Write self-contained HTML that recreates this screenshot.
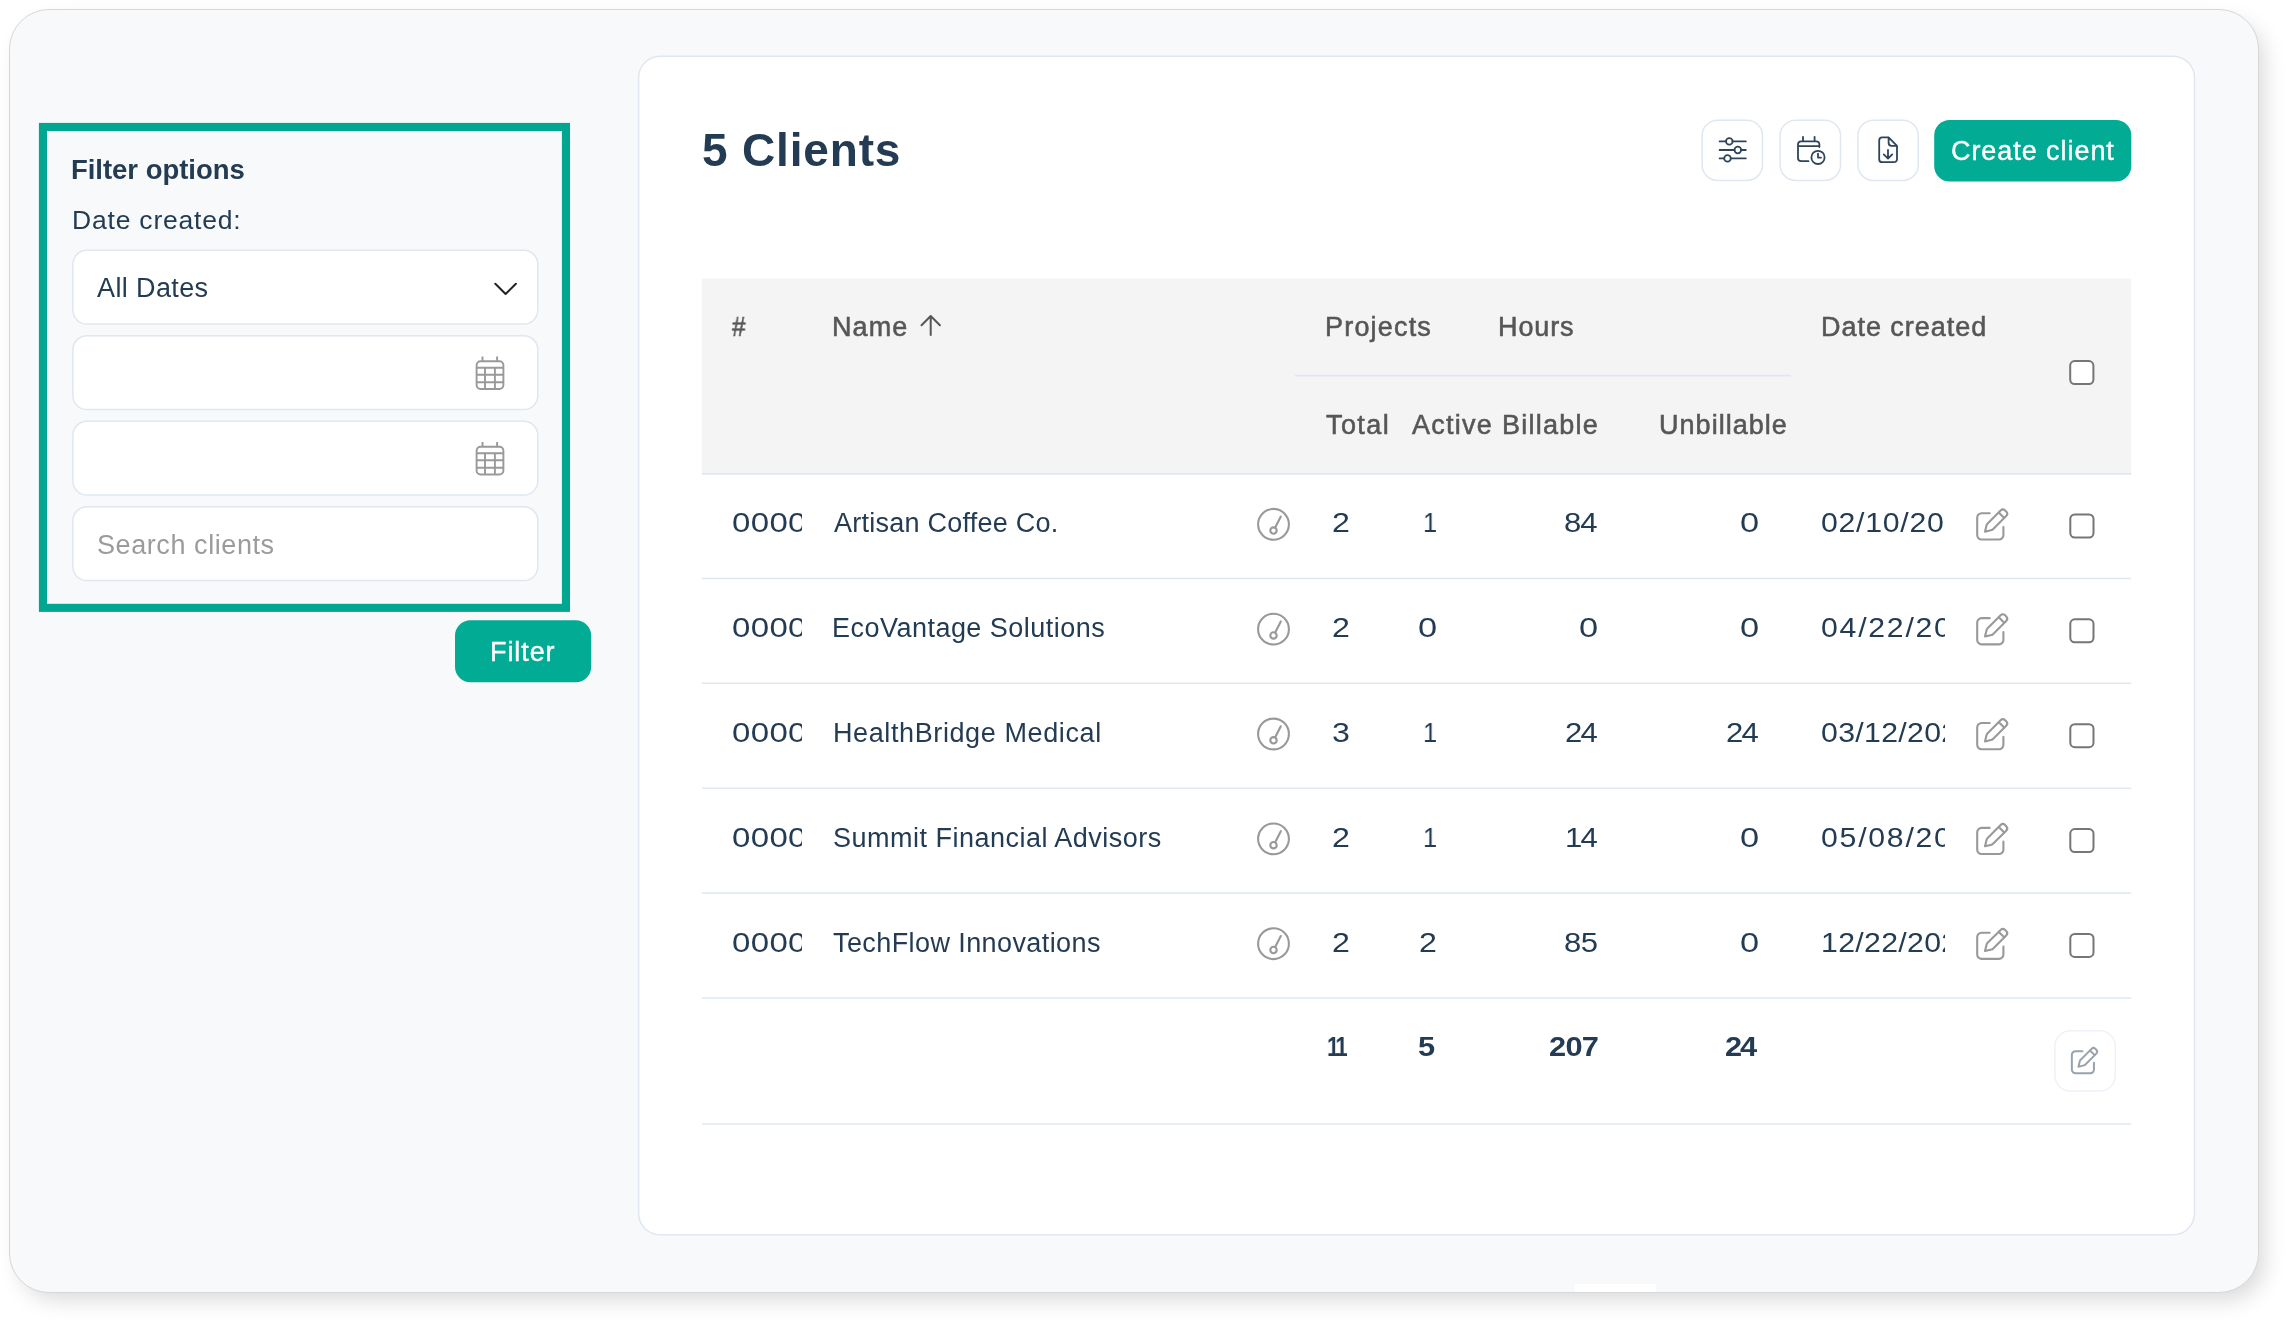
<!DOCTYPE html><html lang="en"><head><meta charset="utf-8"><title>Clients</title><style>
html,body{margin:0;padding:0;background:#fff}
body{width:2286px;height:1320px;position:relative;overflow:hidden;font-family:'Liberation Sans',sans-serif}
.a{position:absolute;box-sizing:border-box}
.t{position:absolute;white-space:pre;margin:0;will-change:transform}
.frame{left:9px;top:9px;width:2250px;height:1284px;border:1px solid #d6d7d9;border-radius:40px;background:#f8f9fb;box-shadow:8px 10px 22px -3px rgba(0,0,0,.15)}
svg{position:absolute;left:0;top:0;overflow:visible}

</style></head><body>
<div class="a frame"></div>
<div class="a" style="left:1575px;top:1284px;width:81px;height:8px;background:#fff"></div>
<svg width="2286" height="1320" fill="none" stroke-linecap="round" stroke-linejoin="round">
<rect x="42.95" y="126.95" width="523" height="480.9" stroke="#00a68f" stroke-width="8.1" stroke-linejoin="miter"/>
<rect x="72.9" y="250.3" width="464.9" height="73.75" rx="14" fill="#fff" stroke="#e0e7f1" stroke-width="1.5"/>
<rect x="72.9" y="335.8" width="464.9" height="73.75" rx="14" fill="#fff" stroke="#e0e7f1" stroke-width="1.5"/>
<rect x="72.9" y="421.3" width="464.9" height="73.75" rx="14" fill="#fff" stroke="#e0e7f1" stroke-width="1.5"/>
<rect x="72.9" y="506.8" width="464.9" height="73.75" rx="14" fill="#fff" stroke="#e0e7f1" stroke-width="1.5"/>
<rect x="455" y="620.2" width="136.2" height="62.1" rx="15.5" fill="#02ab94"/>
<polyline points="495.3,283.8 505.6,294 515.9,283.8" stroke="#222" stroke-width="2"/>
<g transform="translate(0,0)" stroke="#999" stroke-width="1.9" stroke-linecap="butt">
<rect x="476.6" y="361.2" width="26.8" height="27.8" rx="4"/>
<path d="M482.5 356.6V361M497.1 356.6V361M476.6 367.7H503.4M476.6 374.7H503.4M476.6 382.2H503.4M485 367.7V389M494.9 367.7V389"/>
</g>
<g transform="translate(0,85.5)" stroke="#999" stroke-width="1.9" stroke-linecap="butt">
<rect x="476.6" y="361.2" width="26.8" height="27.8" rx="4"/>
<path d="M482.5 356.6V361M497.1 356.6V361M476.6 367.7H503.4M476.6 374.7H503.4M476.6 382.2H503.4M485 367.7V389M494.9 367.7V389"/>
</g>
<rect x="638.6" y="56.2" width="1555.9" height="1178.6" rx="21.5" fill="#fff" stroke="#e0e7f1" stroke-width="1.5"/>
<rect x="1702.1" y="120.2" width="60.4" height="60.2" rx="15.5" fill="#fff" stroke="#e0e7f1" stroke-width="1.5"/>
<rect x="1780.1" y="120.2" width="60.4" height="60.2" rx="15.5" fill="#fff" stroke="#e0e7f1" stroke-width="1.5"/>
<rect x="1857.9" y="120.2" width="60.4" height="60.2" rx="15.5" fill="#fff" stroke="#e0e7f1" stroke-width="1.5"/>
<rect x="1934.2" y="119.9" width="197.1" height="61.7" rx="15.5" fill="#02ab94"/>
<rect x="701.8" y="278.7" width="1429.4" height="195" fill="#f4f4f4"/>
<path d="M701.8 473.9H2131.2M1295 375.6H1790.8" stroke="#e0e7f1" stroke-width="1.6" stroke-linecap="butt"/>
<path d="M701.8 578.50H2131.2M701.8 683.35H2131.2M701.8 788.20H2131.2M701.8 893.05H2131.2M701.8 997.90H2131.2M701.8 1123.90H2131.2" stroke="#e0e7f1" stroke-width="1.5" stroke-linecap="butt"/>
<g stroke="#767676" stroke-width="2" fill="#fff">
<rect x="2070.2" y="361.1" width="23.2" height="23" rx="4.5"/>
<rect x="2070.3" y="514.50" width="23.2" height="23" rx="4.5"/>
<rect x="2070.3" y="619.35" width="23.2" height="23" rx="4.5"/>
<rect x="2070.3" y="724.20" width="23.2" height="23" rx="4.5"/>
<rect x="2070.3" y="829.05" width="23.2" height="23" rx="4.5"/>
<rect x="2070.3" y="933.90" width="23.2" height="23" rx="4.5"/>
</g>
<rect x="2054.9" y="1030.8" width="60.4" height="60.2" rx="15.5" fill="#fff" stroke="#eef1f7" stroke-width="1.5"/>
<path d="M930.7 335V316M921.5 325.2L930.7 316L939.9 325.2" stroke="#565656" stroke-width="2"/>
<g stroke="#2d4459" stroke-width="1.8"><path d="M1719.6 141.4H1726M1732.6 141.4H1745.8M1719.6 150H1734.4M1741.2 150H1745.8M1719.6 158.4H1724.2M1730.8 158.4H1745.8"/><circle cx="1729.3" cy="141.4" r="3.3"/><circle cx="1737.8" cy="150" r="3.3"/><circle cx="1727.5" cy="158.4" r="3.3"/></g>
<g stroke="#2d4459" stroke-width="1.8"><path d="M1808.5 161.2H1801.2a3.2 3.2 0 0 1 -3.2 -3.2V144.5a3.2 3.2 0 0 1 3.2 -3.2H1816.2a3.2 3.2 0 0 1 3.2 3.2V147M1798 146.2H1819.4M1803 136.8V141.3M1814.6 136.8V141.3"/><circle cx="1818" cy="157.4" r="6.6" fill="#fff"/><path d="M1818 153.6V157.6H1821"/></g>
<g stroke="#2d4459" stroke-width="1.8"><path d="M1888.6 137.4H1882.2a3 3 0 0 0 -3 3V159.2a3 3 0 0 0 3 3H1894a3 3 0 0 0 3 -3V145.8L1888.6 137.4V142.8a3 3 0 0 0 3 3H1897"/><path d="M1888 150V158.4M1883.8 154.4L1888 158.6L1892.2 154.4"/></g>
<g stroke="#999" stroke-width="2.1"><circle cx="1273.5" cy="524.30" r="15.4"/><circle cx="1273.5" cy="530.60" r="3.2"/><path d="M1275.2 527.60L1280.8 516.60"/></g>
<g transform="translate(1976.2,508.3) scale(1.0)" stroke="#999" stroke-width="2.10"><path d="M13.5 5H5.4A4.4 4.4 0 0 0 1 9.4V26.8A4.4 4.4 0 0 0 5.4 31.2H22.8A4.4 4.4 0 0 0 27.2 26.8V18.8"/><path d="M8.8 23.4L10.4 16.8Q10.6 16 11.2 15.4L24.4 2.2A3.2 3.2 0 0 1 28.9 2.2L30 3.3A3.2 3.2 0 0 1 30 7.8L16.8 21Q16.2 21.6 15.4 21.8Z"/><path d="M22.6 4.2L28 9.6"/></g>
<g stroke="#999" stroke-width="2.1"><circle cx="1273.5" cy="629.15" r="15.4"/><circle cx="1273.5" cy="635.45" r="3.2"/><path d="M1275.2 632.45L1280.8 621.45"/></g>
<g transform="translate(1976.2,613.15) scale(1.0)" stroke="#999" stroke-width="2.10"><path d="M13.5 5H5.4A4.4 4.4 0 0 0 1 9.4V26.8A4.4 4.4 0 0 0 5.4 31.2H22.8A4.4 4.4 0 0 0 27.2 26.8V18.8"/><path d="M8.8 23.4L10.4 16.8Q10.6 16 11.2 15.4L24.4 2.2A3.2 3.2 0 0 1 28.9 2.2L30 3.3A3.2 3.2 0 0 1 30 7.8L16.8 21Q16.2 21.6 15.4 21.8Z"/><path d="M22.6 4.2L28 9.6"/></g>
<g stroke="#999" stroke-width="2.1"><circle cx="1273.5" cy="734.00" r="15.4"/><circle cx="1273.5" cy="740.30" r="3.2"/><path d="M1275.2 737.30L1280.8 726.30"/></g>
<g transform="translate(1976.2,718.0) scale(1.0)" stroke="#999" stroke-width="2.10"><path d="M13.5 5H5.4A4.4 4.4 0 0 0 1 9.4V26.8A4.4 4.4 0 0 0 5.4 31.2H22.8A4.4 4.4 0 0 0 27.2 26.8V18.8"/><path d="M8.8 23.4L10.4 16.8Q10.6 16 11.2 15.4L24.4 2.2A3.2 3.2 0 0 1 28.9 2.2L30 3.3A3.2 3.2 0 0 1 30 7.8L16.8 21Q16.2 21.6 15.4 21.8Z"/><path d="M22.6 4.2L28 9.6"/></g>
<g stroke="#999" stroke-width="2.1"><circle cx="1273.5" cy="838.85" r="15.4"/><circle cx="1273.5" cy="845.15" r="3.2"/><path d="M1275.2 842.15L1280.8 831.15"/></g>
<g transform="translate(1976.2,822.85) scale(1.0)" stroke="#999" stroke-width="2.10"><path d="M13.5 5H5.4A4.4 4.4 0 0 0 1 9.4V26.8A4.4 4.4 0 0 0 5.4 31.2H22.8A4.4 4.4 0 0 0 27.2 26.8V18.8"/><path d="M8.8 23.4L10.4 16.8Q10.6 16 11.2 15.4L24.4 2.2A3.2 3.2 0 0 1 28.9 2.2L30 3.3A3.2 3.2 0 0 1 30 7.8L16.8 21Q16.2 21.6 15.4 21.8Z"/><path d="M22.6 4.2L28 9.6"/></g>
<g stroke="#999" stroke-width="2.1"><circle cx="1273.5" cy="943.70" r="15.4"/><circle cx="1273.5" cy="950.00" r="3.2"/><path d="M1275.2 947.00L1280.8 936.00"/></g>
<g transform="translate(1976.2,927.7) scale(1.0)" stroke="#999" stroke-width="2.10"><path d="M13.5 5H5.4A4.4 4.4 0 0 0 1 9.4V26.8A4.4 4.4 0 0 0 5.4 31.2H22.8A4.4 4.4 0 0 0 27.2 26.8V18.8"/><path d="M8.8 23.4L10.4 16.8Q10.6 16 11.2 15.4L24.4 2.2A3.2 3.2 0 0 1 28.9 2.2L30 3.3A3.2 3.2 0 0 1 30 7.8L16.8 21Q16.2 21.6 15.4 21.8Z"/><path d="M22.6 4.2L28 9.6"/></g>
<g transform="translate(2071,1047) scale(0.84375)" stroke="#98a3ae" stroke-width="2.37"><path d="M13.5 5H5.4A4.4 4.4 0 0 0 1 9.4V26.8A4.4 4.4 0 0 0 5.4 31.2H22.8A4.4 4.4 0 0 0 27.2 26.8V18.8"/><path d="M8.8 23.4L10.4 16.8Q10.6 16 11.2 15.4L24.4 2.2A3.2 3.2 0 0 1 28.9 2.2L30 3.3A3.2 3.2 0 0 1 30 7.8L16.8 21Q16.2 21.6 15.4 21.8Z"/><path d="M22.6 4.2L28 9.6"/></g>
</svg>
<span class="t" style="left:71.46px;top:155.6px;font:700 27.5px/27.5px 'Liberation Sans', sans-serif;letter-spacing:-0.032px;color:#233c53">Filter options</span>
<span class="t" style="left:72.21px;top:206.8px;font:400 26.5px/26.5px 'Liberation Sans', sans-serif;letter-spacing:0.802px;color:#233c53">Date created:</span>
<span class="t" style="left:97.43px;top:275.0px;font:400 27px/27px 'Liberation Sans', sans-serif;letter-spacing:0.385px;color:#233c53">All Dates</span>
<span class="t" style="left:96.71px;top:531.6px;font:400 27px/27px 'Liberation Sans', sans-serif;letter-spacing:0.578px;color:#9b9b9b">Search clients</span>
<span class="t" style="left:489.69px;top:638.9px;font:400 27px/27px 'Liberation Sans', sans-serif;letter-spacing:0.912px;color:#fff;-webkit-text-stroke:0.4px #fff">Filter</span>
<span class="t" style="left:701.85px;top:126.5px;font:700 46px/46px 'Liberation Sans', sans-serif;letter-spacing:0.832px;color:#233c53">5 Clients</span>
<span class="t" style="left:1950.94px;top:138.1px;font:400 27px/27px 'Liberation Sans', sans-serif;letter-spacing:0.94px;color:#fff;-webkit-text-stroke:0.4px #fff">Create client</span>
<span class="t" style="left:732.13px;top:313.7px;font:400 27px/27px 'Liberation Sans', sans-serif;letter-spacing:0px;color:#565656;transform:scaleX(0.9);transform-origin:0 0;-webkit-text-stroke:0.55px #565656">#</span>
<span class="t" style="left:832.31px;top:313.7px;font:400 27px/27px 'Liberation Sans', sans-serif;letter-spacing:1.118px;color:#565656;-webkit-text-stroke:0.55px #565656">Name</span>
<span class="t" style="left:1324.91px;top:313.9px;font:400 27px/27px 'Liberation Sans', sans-serif;letter-spacing:1.191px;color:#565656;-webkit-text-stroke:0.55px #565656">Projects</span>
<span class="t" style="left:1497.51px;top:313.9px;font:400 27px/27px 'Liberation Sans', sans-serif;letter-spacing:0.884px;color:#565656;-webkit-text-stroke:0.55px #565656">Hours</span>
<span class="t" style="left:1821.01px;top:313.7px;font:400 27px/27px 'Liberation Sans', sans-serif;letter-spacing:0.963px;color:#565656;-webkit-text-stroke:0.55px #565656">Date created</span>
<span class="t" style="left:1325.73px;top:411.9px;font:400 27px/27px 'Liberation Sans', sans-serif;letter-spacing:1.429px;color:#565656;-webkit-text-stroke:0.55px #565656">Total</span>
<span class="t" style="left:1412.40px;top:411.9px;font:400 27px/27px 'Liberation Sans', sans-serif;letter-spacing:1.263px;color:#565656;-webkit-text-stroke:0.55px #565656">Active</span>
<span class="t" style="left:1502.41px;top:411.9px;font:400 27px/27px 'Liberation Sans', sans-serif;letter-spacing:1.25px;color:#565656;-webkit-text-stroke:0.55px #565656">Billable</span>
<span class="t" style="left:1659.20px;top:411.9px;font:400 27px/27px 'Liberation Sans', sans-serif;letter-spacing:1.035px;color:#565656;-webkit-text-stroke:0.55px #565656">Unbillable</span>
<div class="a" style="left:725px;top:503.1px;width:77.0px;height:39.5px;overflow:hidden"><span class="t" style="left:6.85px;top:6px;font:400 27.5px/27.5px 'Liberation Sans', sans-serif;letter-spacing:0.29px;color:#233c53;transform:scaleX(1.2);transform-origin:0 0">00001</span></div>
<span class="t" style="left:833.63px;top:510.1px;font:400 27px/27px 'Liberation Sans', sans-serif;letter-spacing:0.238px;color:#233c53">Artisan Coffee Co.</span>
<span class="t" style="left:1332.04px;top:509.1px;font:400 27.5px/27.5px 'Liberation Sans', sans-serif;letter-spacing:0px;color:#233c53;transform:scaleX(1.17);transform-origin:0 0">2</span>
<span class="t" style="left:1422.62px;top:509.1px;font:400 27.5px/27.5px 'Liberation Sans', sans-serif;letter-spacing:0px;color:#233c53;transform:scaleX(0.92);transform-origin:0 0">1</span>
<span class="t" style="left:1564.19px;top:509.1px;font:400 27.5px/27.5px 'Liberation Sans', sans-serif;letter-spacing:-0.963px;color:#233c53;transform:scaleX(1.13);transform-origin:0 0">84</span>
<span class="t" style="left:1740.29px;top:509.1px;font:400 27.5px/27.5px 'Liberation Sans', sans-serif;letter-spacing:0px;color:#233c53;transform:scaleX(1.25);transform-origin:0 0">0</span>
<div class="a" style="left:1815px;top:503.1px;width:129.7px;height:39.5px;overflow:hidden"><span class="t" style="left:6.27px;top:6px;font:400 27.5px/27.5px 'Liberation Sans', sans-serif;letter-spacing:0.656px;color:#233c53;transform:scaleX(1.1);transform-origin:0 0">02/10/2025</span></div>
<div class="a" style="left:725px;top:608.0px;width:77.0px;height:39.5px;overflow:hidden"><span class="t" style="left:6.85px;top:6px;font:400 27.5px/27.5px 'Liberation Sans', sans-serif;letter-spacing:0.29px;color:#233c53;transform:scaleX(1.2);transform-origin:0 0">00001</span></div>
<span class="t" style="left:831.86px;top:615.0px;font:400 27px/27px 'Liberation Sans', sans-serif;letter-spacing:0.475px;color:#233c53">EcoVantage Solutions</span>
<span class="t" style="left:1332.04px;top:614.0px;font:400 27.5px/27.5px 'Liberation Sans', sans-serif;letter-spacing:0px;color:#233c53;transform:scaleX(1.17);transform-origin:0 0">2</span>
<span class="t" style="left:1417.79px;top:614.0px;font:400 27.5px/27.5px 'Liberation Sans', sans-serif;letter-spacing:0px;color:#233c53;transform:scaleX(1.25);transform-origin:0 0">0</span>
<span class="t" style="left:1578.99px;top:614.0px;font:400 27.5px/27.5px 'Liberation Sans', sans-serif;letter-spacing:0px;color:#233c53;transform:scaleX(1.25);transform-origin:0 0">0</span>
<span class="t" style="left:1740.29px;top:614.0px;font:400 27.5px/27.5px 'Liberation Sans', sans-serif;letter-spacing:0px;color:#233c53;transform:scaleX(1.25);transform-origin:0 0">0</span>
<div class="a" style="left:1815px;top:608.0px;width:129.7px;height:39.5px;overflow:hidden"><span class="t" style="left:6.27px;top:6px;font:400 27.5px/27.5px 'Liberation Sans', sans-serif;letter-spacing:1.583px;color:#233c53;transform:scaleX(1.1);transform-origin:0 0">04/22/2025</span></div>
<div class="a" style="left:725px;top:712.8px;width:77.0px;height:39.5px;overflow:hidden"><span class="t" style="left:6.85px;top:6px;font:400 27.5px/27.5px 'Liberation Sans', sans-serif;letter-spacing:0.29px;color:#233c53;transform:scaleX(1.2);transform-origin:0 0">00001</span></div>
<span class="t" style="left:832.56px;top:719.8px;font:400 27px/27px 'Liberation Sans', sans-serif;letter-spacing:0.606px;color:#233c53">HealthBridge Medical</span>
<span class="t" style="left:1331.90px;top:718.8px;font:400 27.5px/27.5px 'Liberation Sans', sans-serif;letter-spacing:0px;color:#233c53;transform:scaleX(1.17);transform-origin:0 0">3</span>
<span class="t" style="left:1422.62px;top:718.8px;font:400 27.5px/27.5px 'Liberation Sans', sans-serif;letter-spacing:0px;color:#233c53;transform:scaleX(0.92);transform-origin:0 0">1</span>
<span class="t" style="left:1564.82px;top:718.8px;font:400 27.5px/27.5px 'Liberation Sans', sans-serif;letter-spacing:-1.525px;color:#233c53;transform:scaleX(1.13);transform-origin:0 0">24</span>
<span class="t" style="left:1726.12px;top:718.8px;font:400 27.5px/27.5px 'Liberation Sans', sans-serif;letter-spacing:-1.525px;color:#233c53;transform:scaleX(1.13);transform-origin:0 0">24</span>
<div class="a" style="left:1815px;top:712.8px;width:129.7px;height:39.5px;overflow:hidden"><span class="t" style="left:6.27px;top:6px;font:400 27.5px/27.5px 'Liberation Sans', sans-serif;letter-spacing:0.292px;color:#233c53;transform:scaleX(1.1);transform-origin:0 0">03/12/2025</span></div>
<div class="a" style="left:725px;top:817.6px;width:77.0px;height:39.5px;overflow:hidden"><span class="t" style="left:6.85px;top:6px;font:400 27.5px/27.5px 'Liberation Sans', sans-serif;letter-spacing:0.29px;color:#233c53;transform:scaleX(1.2);transform-origin:0 0">00001</span></div>
<span class="t" style="left:832.61px;top:824.6px;font:400 27px/27px 'Liberation Sans', sans-serif;letter-spacing:0.488px;color:#233c53">Summit Financial Advisors</span>
<span class="t" style="left:1332.04px;top:823.6px;font:400 27.5px/27.5px 'Liberation Sans', sans-serif;letter-spacing:0px;color:#233c53;transform:scaleX(1.17);transform-origin:0 0">2</span>
<span class="t" style="left:1422.62px;top:823.6px;font:400 27.5px/27.5px 'Liberation Sans', sans-serif;letter-spacing:0px;color:#233c53;transform:scaleX(0.92);transform-origin:0 0">1</span>
<span class="t" style="left:1564.82px;top:823.6px;font:400 27.5px/27.5px 'Liberation Sans', sans-serif;letter-spacing:-1.525px;color:#233c53;transform:scaleX(1.13);transform-origin:0 0">14</span>
<span class="t" style="left:1740.29px;top:823.6px;font:400 27.5px/27.5px 'Liberation Sans', sans-serif;letter-spacing:0px;color:#233c53;transform:scaleX(1.25);transform-origin:0 0">0</span>
<div class="a" style="left:1815px;top:817.6px;width:129.7px;height:39.5px;overflow:hidden"><span class="t" style="left:6.27px;top:6px;font:400 27.5px/27.5px 'Liberation Sans', sans-serif;letter-spacing:1.583px;color:#233c53;transform:scaleX(1.1);transform-origin:0 0">05/08/2025</span></div>
<div class="a" style="left:725px;top:922.5px;width:77.0px;height:39.5px;overflow:hidden"><span class="t" style="left:6.85px;top:6px;font:400 27.5px/27.5px 'Liberation Sans', sans-serif;letter-spacing:0.29px;color:#233c53;transform:scaleX(1.2);transform-origin:0 0">00001</span></div>
<span class="t" style="left:832.98px;top:929.5px;font:400 27px/27px 'Liberation Sans', sans-serif;letter-spacing:0.41px;color:#233c53">TechFlow Innovations</span>
<span class="t" style="left:1332.04px;top:928.5px;font:400 27.5px/27.5px 'Liberation Sans', sans-serif;letter-spacing:0px;color:#233c53;transform:scaleX(1.17);transform-origin:0 0">2</span>
<span class="t" style="left:1419.24px;top:928.5px;font:400 27.5px/27.5px 'Liberation Sans', sans-serif;letter-spacing:0px;color:#233c53;transform:scaleX(1.17);transform-origin:0 0">2</span>
<span class="t" style="left:1564.19px;top:928.5px;font:400 27.5px/27.5px 'Liberation Sans', sans-serif;letter-spacing:-0.578px;color:#233c53;transform:scaleX(1.13);transform-origin:0 0">85</span>
<span class="t" style="left:1740.29px;top:928.5px;font:400 27.5px/27.5px 'Liberation Sans', sans-serif;letter-spacing:0px;color:#233c53;transform:scaleX(1.25);transform-origin:0 0">0</span>
<div class="a" style="left:1815px;top:922.5px;width:129.7px;height:39.5px;overflow:hidden"><span class="t" style="left:6.18px;top:6px;font:400 27.5px/27.5px 'Liberation Sans', sans-serif;letter-spacing:0.291px;color:#233c53;transform:scaleX(1.1);transform-origin:0 0">12/22/2025</span></div>
<span class="t" style="left:1326.94px;top:1032.9px;font:700 27.5px/27.5px 'Liberation Sans', sans-serif;letter-spacing:-3.233px;color:#233c53;transform:scaleX(0.8);transform-origin:0 0">11</span>
<span class="t" style="left:1418.10px;top:1032.9px;font:700 27.5px/27.5px 'Liberation Sans', sans-serif;letter-spacing:0px;color:#233c53;transform:scaleX(1.12);transform-origin:0 0">5</span>
<span class="t" style="left:1548.92px;top:1032.9px;font:700 27.5px/27.5px 'Liberation Sans', sans-serif;letter-spacing:-0.633px;color:#233c53;transform:scaleX(1.12);transform-origin:0 0">207</span>
<span class="t" style="left:1725.42px;top:1032.9px;font:700 27.5px/27.5px 'Liberation Sans', sans-serif;letter-spacing:-1.808px;color:#233c53;transform:scaleX(1.12);transform-origin:0 0">24</span>
</body></html>
